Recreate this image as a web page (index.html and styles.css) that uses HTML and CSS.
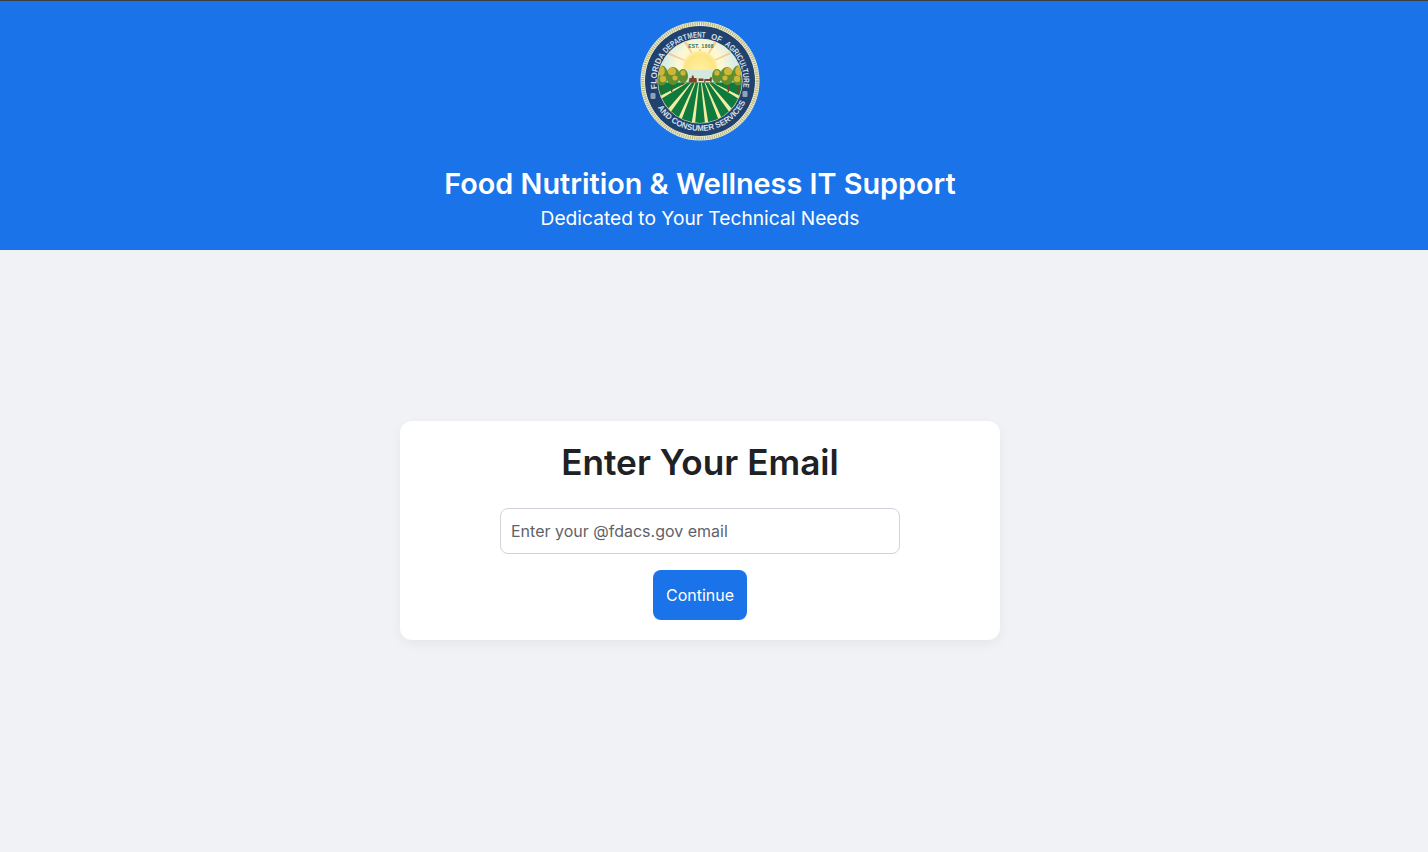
FILE: index.html
```html
<!DOCTYPE html>
<html lang="en">
<head>
    <meta charset="UTF-8">
    <meta name="viewport" content="width=device-width, initial-scale=1.0">
    <title>Food Nutrition &amp; Wellness IT Support</title>
    <link rel="stylesheet" href="styles.css">
</head>
<body>
    <header class="site-header">
        <svg class="seal" viewBox="0 0 120 120" role="img" aria-label="Florida Department of Agriculture and Consumer Services seal">
            <defs>
                <clipPath id="sceneClip"><circle cx="60" cy="60" r="42"/></clipPath>
                <radialGradient id="skyGlow" gradientUnits="userSpaceOnUse" cx="60" cy="46" r="40">
                    <stop offset="0" stop-color="#fff3a8"/>
                    <stop offset="0.55" stop-color="#fdf8d2"/>
                    <stop offset="1" stop-color="#c9e9ee"/>
                </radialGradient>
                <radialGradient id="sunGlow" gradientUnits="userSpaceOnUse" cx="60" cy="48" r="18">
                    <stop offset="0" stop-color="#fff0a0"/>
                    <stop offset="0.8" stop-color="#fde583"/>
                    <stop offset="1" stop-color="#fdeea6"/>
                </radialGradient>
                <path id="arcTop" d="M 17.16 67.55 A 43.5 43.5 0 1 1 103.08 66.05"/>
                <path id="arcBottom" d="M 17.6 86.5 A 50 50 0 0 0 105.3 81.1"/>
            </defs>

            <circle class="seal-edge" cx="60" cy="60" r="59.5"/>
            <circle class="seal-rope" cx="60" cy="60" r="57.3"/>
            <circle class="seal-band" cx="60" cy="60" r="55"/>
            <circle class="seal-inner-line" cx="60" cy="60" r="42.6"/>

            <text class="seal-text"><textPath href="#arcTop" startOffset="0" textLength="35.7" lengthAdjust="spacingAndGlyphs">FLORIDA</textPath></text>
            <text class="seal-text"><textPath href="#arcTop" startOffset="37.2" textLength="26" lengthAdjust="spacingAndGlyphs">DEPART</textPath></text>
            <text class="seal-text"><textPath href="#arcTop" startOffset="63.7" textLength="17.5" lengthAdjust="spacingAndGlyphs">MENT</textPath></text>
            <text class="seal-text"><textPath href="#arcTop" startOffset="86.5" textLength="10.6" lengthAdjust="spacingAndGlyphs">OF</textPath></text>
            <text class="seal-text"><textPath href="#arcTop" startOffset="101.7" textLength="48.6" lengthAdjust="spacingAndGlyphs">AGRICULTURE</textPath></text>
            <text class="seal-text"><textPath href="#arcBottom" textLength="107" lengthAdjust="spacingAndGlyphs">AND CONSUMER SERVICES</textPath></text>

            <rect class="seal-mark" x="10.5" y="72" width="5" height="6" rx="1"/>
            <rect class="seal-mark" x="102.5" y="70" width="5" height="6" rx="1"/>

            <g clip-path="url(#sceneClip)">
                <rect x="18" y="18" width="84" height="32" fill="url(#skyGlow)"/>
                <g class="sun-rays">
                    <path d="M60 46 L28 33.5 L29 31.5 Z"/>
                    <path d="M60 46 L44 21.5 L46.5 20.5 Z"/>
                    <path d="M60 46 L59 28 L61 28 Z"/>
                    <path d="M60 46 L74.5 20.5 L77 21.5 Z"/>
                    <path d="M60 46 L90 31 L91 33 Z"/>
                </g>
                <circle cx="60" cy="47" r="17" fill="url(#sunGlow)"/>
                <rect class="horizon" x="18" y="49" width="84" height="13"/>
                <rect class="field-base" x="18" y="61.5" width="84" height="44"/>
                <g class="field-light">
                    <path d="M59 62 L55 103 L51.5 103 L58.2 62 Z"/>
                    <path d="M61 62 L65 103 L68.5 103 L61.8 62 Z"/>
                    <path d="M55.5 62 L41 100 L37.5 99 L54.6 62 Z"/>
                    <path d="M64.5 62 L79 100 L82.5 99 L65.4 62 Z"/>
                    <path d="M51.5 62 L30 92 L27 89 L50.5 62 Z"/>
                    <path d="M68.5 62 L90 92 L93 89 L69.5 62 Z"/>
                    <path d="M47 62 L21 78 L19 75.5 L46 62 Z"/>
                    <path d="M73 62 L99 78 L101 75.5 L74 62 Z"/>
                </g>
                <g class="tree-trunk">
                    <rect x="21" y="60" width="1.4" height="12"/>
                    <rect x="31" y="60" width="1.4" height="11"/>
                    <rect x="42" y="58" width="1.2" height="6"/>
                    <rect x="97.6" y="60" width="1.4" height="12"/>
                    <rect x="87.6" y="60" width="1.4" height="11"/>
                    <rect x="76.8" y="58" width="1.2" height="6"/>
                </g>
                <g class="tree-dark">
                    <ellipse cx="22" cy="54.5" rx="6" ry="10"/>
                    <ellipse cx="33" cy="55" rx="7" ry="9"/>
                    <ellipse cx="43" cy="55" rx="5" ry="7"/>
                    <ellipse cx="98" cy="54.5" rx="6" ry="10"/>
                    <ellipse cx="87" cy="55" rx="7" ry="9"/>
                    <ellipse cx="77" cy="55" rx="5" ry="7"/>
                </g>
                <g class="tree-gold">
                    <ellipse cx="21" cy="50" rx="3.8" ry="5"/>
                    <ellipse cx="23" cy="58" rx="3.2" ry="3.2"/>
                    <ellipse cx="32" cy="50.5" rx="4" ry="3.8"/>
                    <ellipse cx="35" cy="57" rx="2.6" ry="2.4"/>
                    <ellipse cx="43" cy="52" rx="2.6" ry="2.8"/>
                    <ellipse cx="99" cy="50" rx="3.8" ry="5"/>
                    <ellipse cx="97" cy="58" rx="3.2" ry="3.2"/>
                    <ellipse cx="88" cy="50.5" rx="4" ry="3.8"/>
                    <ellipse cx="85" cy="57" rx="2.6" ry="2.4"/>
                    <ellipse cx="77" cy="52" rx="2.6" ry="2.8"/>
                </g>
                <g class="farm">
                    <path d="M48.5 61.5 L49.5 57 L51.5 57 L52 54.5 L53.5 54.5 L54 57 L56.5 57 L57 61.5 Z"/>
                    <path d="M58.5 57.5 L63.5 57.5 L63.5 60 L58.5 60 Z"/>
                    <path d="M64.5 58 L69.5 58 L70.5 56 L72 56.5 L71.5 61.5 L70.5 61.5 L70 60 L65.5 60 L65 61.5 L64 61.5 Z"/>
                </g>
            </g>

            <text class="seal-est" x="61" y="27" text-anchor="middle">EST. 1868</text>
        </svg>
        <h1 class="site-title">Food Nutrition &amp; Wellness IT Support</h1>
        <p class="site-subtitle">Dedicated to Your Technical Needs</p>
    </header>

    <main class="content">
        <form class="card">
            <h2 class="card-title">Enter Your Email</h2>
            <input class="email-input" type="email" placeholder="Enter your @fdacs.gov email">
            <button class="btn" type="button">Continue</button>
        </form>
    </main>
</body>
</html>
```

FILE: styles.css
```css
* {
    margin: 0;
    padding: 0;
    box-sizing: border-box;
}

body {
    font-family: Inter, 'Noto Sans', sans-serif;
    background: #f0f2f5;
    min-height: 100vh;
    display: flex;
    flex-direction: column;
}

.site-header {
    background: #1a73e8;
    border-top: 1px solid #3c4043;
    color: white;
    height: 250px;
    padding: 20px 28px 0 0;
    display: flex;
    flex-direction: column;
    align-items: center;
    text-align: center;
}

.seal {
    display: block;
    width: 120px;
    height: 120px;
    margin-bottom: 25px;
}

.seal-edge {
    fill: #eef0dc;
}

.seal-rope {
    fill: none;
    stroke: #b9b67e;
    stroke-width: 3.4;
    stroke-dasharray: 1.2 1;
}

.seal-band {
    fill: #21426f;
}

.seal-inner-line {
    fill: #e9e7c0;
}

.seal-mark {
    fill: #8fa3b8;
}

.seal-text {
    fill: #d5e0ea;
    font-family: 'Liberation Sans', sans-serif;
    font-size: 8.2px;
    font-weight: 700;
}

.seal-est {
    fill: #1d6b63;
    font-family: 'Liberation Sans', sans-serif;
    font-size: 4.8px;
    font-weight: 700;
    letter-spacing: 0.4px;
}

.sun-rays {
    fill: #f9c99a;
}

.horizon {
    fill: #d5e8dc;
}

.field-base {
    fill: #0f7a3e;
}

.field-light {
    fill: #f2eda0;
}

.tree-trunk {
    fill: #6b4a26;
}

.tree-dark {
    fill: #5f8f2e;
}

.tree-gold {
    fill: #cfb53a;
}

.farm {
    fill: #7d4526;
}

.site-title {
    font-size: 28.8px;
    font-weight: 600;
    line-height: 35px;
}

.site-subtitle {
    font-size: 19.2px;
    line-height: 24px;
    margin-top: 5px;
}

.content {
    flex: 1;
    display: flex;
    justify-content: center;
    align-items: center;
    padding: 0 28px 41px 0;
}

.card {
    background: white;
    border-radius: 12px;
    box-shadow: 0 4px 12px rgba(0, 0, 0, 0.05);
    width: 600px;
    height: 219px;
    padding: 20px;
    display: flex;
    flex-direction: column;
    align-items: center;
}

.card-title {
    color: #202124;
    font-size: 35.2px;
    font-weight: 600;
    line-height: 43px;
    margin-bottom: 24px;
}

.email-input {
    width: 400px;
    height: 46px;
    padding: 0 10px;
    border: 1px solid #ced4da;
    border-radius: 8px;
    background: white;
    font-family: inherit;
    font-size: 16px;
    margin-bottom: 16px;
}

.email-input::placeholder {
    color: #5f6368;
    opacity: 1;
}

.btn {
    background: #1a73e8;
    border: none;
    border-radius: 8px;
    color: white;
    cursor: pointer;
    font-family: inherit;
    font-size: 16px;
    font-weight: 400;
    width: 94px;
    height: 50px;
}
```
